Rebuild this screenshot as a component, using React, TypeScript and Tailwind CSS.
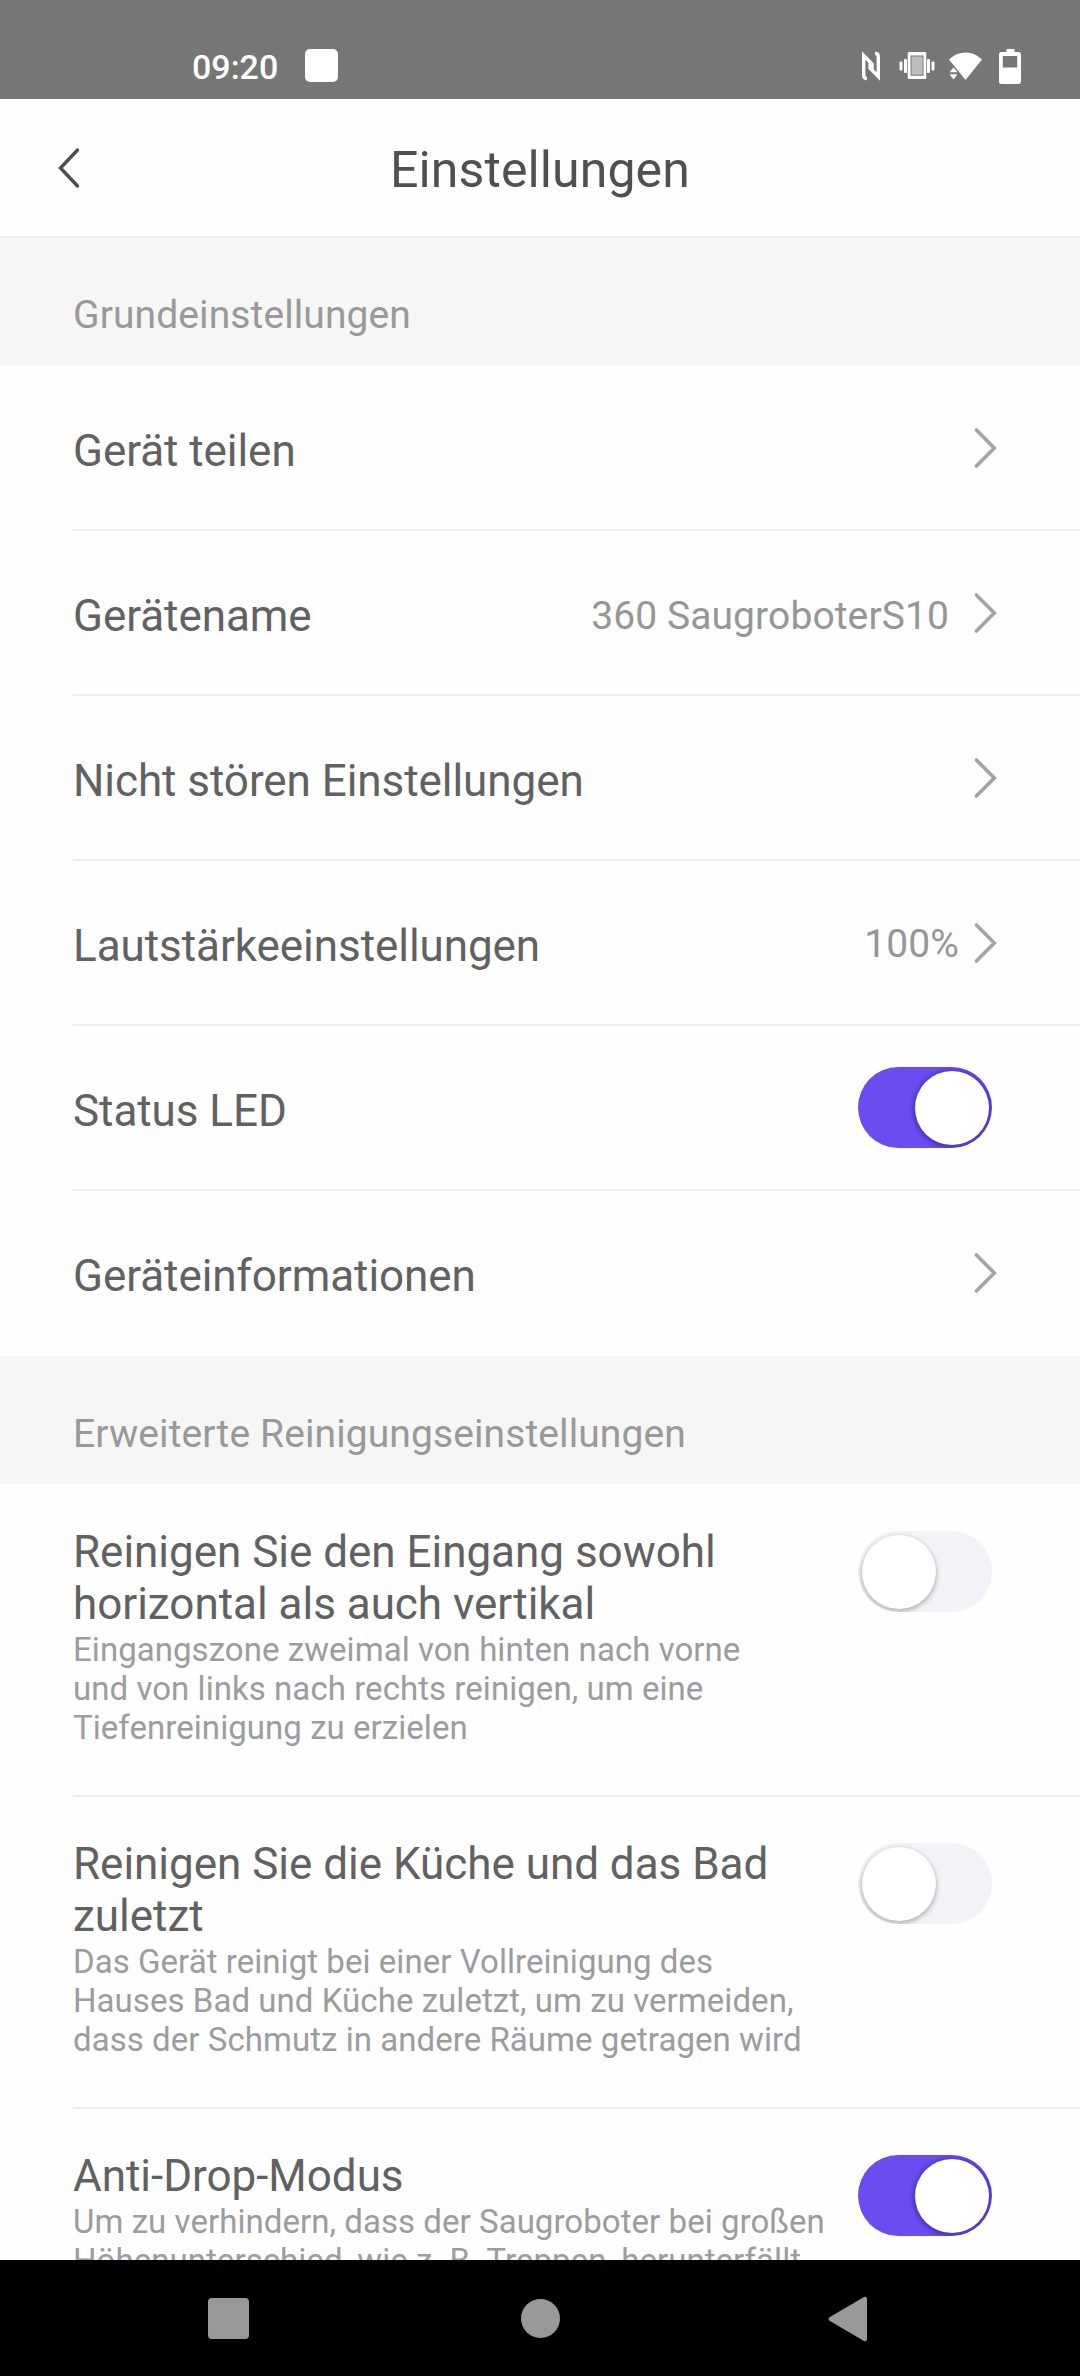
import React, { useState } from "react";

interface BasicItem {
  label: string;
  value?: string;
  valueClass?: string;
  toggle?: boolean;
}

interface CleaningItem {
  title: string;
  description: string;
  enabled: boolean;
}

const basicItems: BasicItem[] = [
  { label: "Gerät teilen" },
  {
    label: "Gerätename",
    value: "360 SaugroboterS10",
    valueClass: "mr-[24px] pt-[7px]",
  },
  { label: "Nicht stören Einstellungen" },
  {
    label: "Lautstärkeeinstellungen",
    value: "100%",
    valueClass: "mr-[14px] pt-[2px]",
  },
  { label: "Status LED", toggle: true },
  { label: "Geräteinformationen" },
];

const cleaningItems: CleaningItem[] = [
  {
    title: "Reinigen Sie den Eingang sowohl\nhorizontal als auch vertikal",
    description:
      "Eingangszone zweimal von hinten nach vorne\nund von links nach rechts reinigen, um eine\nTiefenreinigung zu erzielen",
    enabled: false,
  },
  {
    title: "Reinigen Sie die Küche und das Bad\nzuletzt",
    description:
      "Das Gerät reinigt bei einer Vollreinigung des\nHauses Bad und Küche zuletzt, um zu vermeiden,\ndass der Schmutz in andere Räume getragen wird",
    enabled: false,
  },
  {
    title: "Anti-Drop-Modus",
    description:
      "Um zu verhindern, dass der Saugroboter bei großen\nHöhenunterschied, wie z. B. Treppen, herunterfällt",
    enabled: true,
  },
];

const StatusBar: React.FC = () => (
  <div className="h-[99px] shrink-0 bg-[#767676] text-white flex items-start justify-between pl-[192px] pr-[58px] pt-[47px]">
    <div className="flex items-start">
      <span className="text-[34px] leading-[40px] font-medium">09:20</span>
      <div className="ml-[27px] mt-[2px] w-[33px] h-[33px] rounded-[5px] bg-white" />
    </div>
    <div className="flex items-start">
      {/* NFC */}
      <svg width="20" height="30" viewBox="0 0 20 30" className="mt-[4px]" fill="none" stroke="white" strokeWidth="3.4" strokeLinejoin="miter">
        <path d="M6 27.5H5.2Q2.7 27.5 2.7 24V4.5L11 13V18" />
        <path d="M14 2.5H14.8Q17.3 2.5 17.3 6V25.5L9 17V12" />
      </svg>
      {/* Vibrate */}
      <svg width="36" height="30" viewBox="0 0 36 30" className="ml-[18px] mt-[4px]" fill="white">
        <rect x="0.5" y="10.5" width="3" height="9" rx="1" />
        <rect x="5" y="8" width="3" height="14" rx="1" />
        <rect x="28" y="8" width="3" height="14" rx="1" />
        <rect x="32.5" y="10.5" width="3" height="9" rx="1" />
        <path fillRule="evenodd" d="M10 1H26Q27.3 1 27.3 2.3V26.7Q27.3 28 26 28H10Q8.7 28 8.7 26.7V2.3Q8.7 1 10 1ZM11.5 4.5V24.7H24.5V4.5Z" />
        <rect x="12.5" y="5.5" width="11" height="18.2" fill="#bdbdbd" />
      </svg>
      {/* WLAN */}
      <svg width="35" height="30" viewBox="0 0 35 30" className="ml-[13px] mt-[4px]" fill="white">
        <path d="M5.5 16.5L1.5 21.2H9.5Z" />
        <path d="M5.5 28.5L1.5 23.2H9.5Z" />
        <path d="M1 8.5Q8 1.5 17.5 1.5T34 8.5L18.3 28Q17.5 29 16.7 28Z" stroke="#767676" strokeWidth="1" paintOrder="stroke" />
      </svg>
      {/* Akku */}
      <svg width="24" height="38" viewBox="0 0 24 38" className="ml-[15px]" fill="white">
        <path fillRule="evenodd" d="M8.5 2H16.5V5H20.5Q23 5 23 7.5V34.5Q23 37 20.5 37H3.5Q1 37 1 34.5V7.5Q1 5 3.5 5H8.5ZM4.8 9V20.5H19.2V9Z" />
      </svg>
    </div>
  </div>
);

const Chevron: React.FC = () => (
  <svg width="24" height="42" viewBox="0 0 24 42" fill="none" stroke="#a3a3a3" strokeWidth="3.6" strokeLinecap="round" className="mt-[1px]">
    <path d="M3.4 3L21.3 21L3.4 39" />
  </svg>
);

const Toggle: React.FC<{ initial: boolean }> = ({ initial }) => {
  const [on, setOn] = useState(initial);

  return (
    <button
      onClick={() => setOn(!on)}
      className={`w-[134px] h-[81px] shrink-0 rounded-full flex items-center px-[3.5px] overflow-hidden ${
        on ? "bg-[#6c4bef] justify-end" : "bg-[#f3f2f6] justify-start"
      }`}
    >
      <span
        className={`w-[74px] h-[74px] rounded-full bg-white ${
          on
            ? "shadow-[0_1px_4px_2px_rgba(30,10,90,0.4)]"
            : "shadow-[0_2px_4px_1px_rgba(0,0,0,0.25)]"
        }`}
      />
    </button>
  );
};

const SectionHeader: React.FC<{ title: string; className: string }> = ({
  title,
  className,
}) => (
  <h2
    className={`shrink-0 bg-[#f6f6f6] pl-[73px] text-[39px] leading-[46px] tracking-[0.1px] text-[#999999] ${className}`}
  >
    {title}
  </h2>
);

export default function App() {
  return (
    <div className="w-[1080px] h-[2376px] flex flex-col overflow-hidden bg-[#fefefe] font-['Roboto',sans-serif]">
      <StatusBar />

      {/* Header */}
      <header className="h-[139px] shrink-0 border-b-2 border-[#ebebeb] grid grid-cols-[120px_1fr_120px] items-center">
        <button className="pl-[57px]">
          <svg width="24" height="42" viewBox="0 0 24 42" fill="none" stroke="#4d4d4d" strokeWidth="3.4" strokeLinecap="round">
            <path d="M20.5 3L3.5 21L20.5 39" />
          </svg>
        </button>
        <h1 className="pt-[5px] text-center text-[50px] leading-[60px] tracking-[0.1px] text-[#505050]">
          Einstellungen
        </h1>
      </header>

      {/* Content */}
      <main className="flex-1 min-h-0 overflow-hidden">
        <SectionHeader title="Grundeinstellungen" className="h-[127px] pt-[54px]" />
        <ul className="pl-[73px] pt-px">
          {basicItems.map((item) => (
            <li
              key={item.label}
              className="h-[165px] border-b-2 border-[#ededed] last:border-transparent flex items-center pr-[83px]"
            >
              <span className="flex-1 pt-[7px] text-[44px] leading-[52px] tracking-[-0.06px] text-[#616161]">
                {item.label}
              </span>
              {item.value && (
                <span
                  className={`text-[39px] leading-[46px] tracking-[0.1px] text-[#969696] ${item.valueClass}`}
                >
                  {item.value}
                </span>
              )}
              {item.toggle ? (
                <div className="mr-[5px]">
                  <Toggle initial />
                </div>
              ) : (
                <Chevron />
              )}
            </li>
          ))}
        </ul>

        <SectionHeader
          title="Erweiterte Reinigungseinstellungen"
          className="h-[128px] pt-[55px]"
        />
        <ul className="pl-[73px] pt-px">
          {cleaningItems.map((item) => (
            <li
              key={item.title}
              className="h-[312px] border-b-2 border-[#ededed] flex items-start justify-between pr-[88px]"
            >
              <div className="pt-[41px] whitespace-pre">
                <p className="text-[44px] leading-[52px] tracking-[-0.02px] text-[#616161]">
                  {item.title}
                </p>
                <p className="text-[33px] leading-[39px] tracking-[0.05px] text-[#9c9ca0]">
                  {item.description}
                </p>
              </div>
              <div className="pt-[46px]">
                <Toggle initial={item.enabled} />
              </div>
            </li>
          ))}
        </ul>
      </main>

      {/* Navigation bar */}
      <nav className="h-[116px] shrink-0 bg-black flex items-center pl-[208px] pt-px">
        <div className="w-[41px] h-[41px] rounded-[4px] bg-[#999999]" />
        <div className="ml-[272px] w-[39px] h-[39px] rounded-full bg-[#999999]" />
        <svg width="41" height="46" viewBox="0 0 41 46" className="ml-[267px]" fill="#999999" stroke="#999999" strokeWidth="4" strokeLinejoin="round">
          <path d="M3.5 23L38 2.8V43.2Z" />
        </svg>
      </nav>
    </div>
  );
}
